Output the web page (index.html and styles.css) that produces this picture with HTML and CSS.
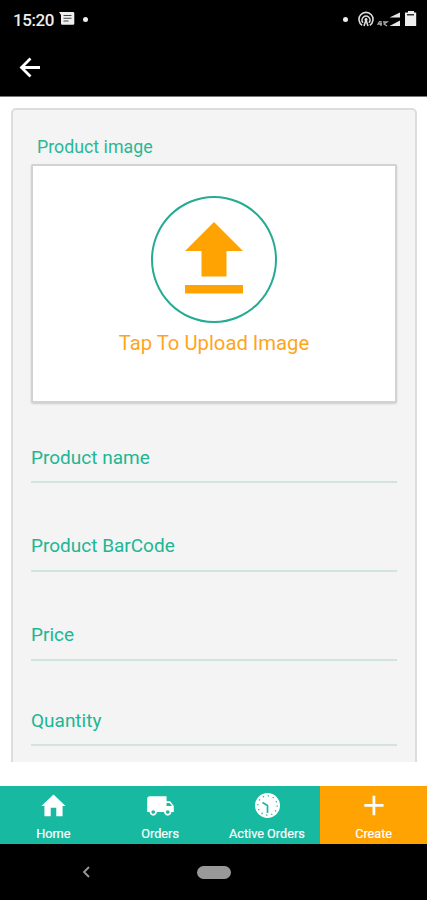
FILE: index.html
```html
<!DOCTYPE html>
<html lang="en">
<head>
<meta charset="utf-8">
<title>Create product</title>
<link rel="stylesheet" href="styles.css">
</head>
<body>
<div class="screen">
  <header class="top">
    <div class="status">
      <div class="status-left">
        <span class="time">15:20</span>
        <svg class="msg" width="16" height="14" viewBox="0 0 16 14"><path fill="#eee" d="M0 0h14a1.300 1.300 0 0 1 1.300 1.300v10.200a1.300 1.300 0 0 1-1.300 1.300H3.300A1.300 1.300 0 0 1 2 11.500V3z"/><path stroke="#444" stroke-width="1.100" d="M4.500 3.500h8M4.500 6.200h8M4.500 9h5"/></svg>
        <i class="dot"></i>
      </div>
      <div class="status-right">
        <i class="dot"></i>
        <svg width="75" height="18" viewBox="0 0 75 18">
          <g fill="none" stroke="#ddd" stroke-width="1.600"><path d="M4.200 15.300A7 7 0 1 1 11.800 15.300"/><path d="M5 12.800a4 4 0 1 1 6 0"/><path d="M6 16l2-6 2 6"/></g>
          <circle cx="8" cy="9.500" r="1.500" fill="#ddd"/>
          <path fill="none" stroke="#aaa" stroke-width="1.300" d="M22 11l-2 3h4M23 11v5M25 12h4l-3 2 3 2"/>
          <path fill="#e8e8e8" d="M31.500 7.500L42 2.500v5zM31.500 16L42 10.500V16z"/>
          <path fill="#eee" d="M48 2.500h2V1h6v1.500h2.200V16H47V2.500z"/><path fill="#333" d="M49 4h7v1.500h-7z"/>
        </svg>
      </div>
    </div>
    <svg class="back" width="22" height="22" viewBox="0 0 22 22"><path fill="none" stroke="#fff" stroke-width="2.800" d="M21 10.500H3M11.500 1.500L2.500 10.500l9 9"/></svg>
  </header>
  <main class="content">
    <section class="card">
      <h1 class="label">Product image</h1>
      <div class="upload">
        <div class="ring"><svg width="60" height="74" viewBox="0 0 60 74"><path fill="#ffa303" d="M30 0l29 29H42.500v25.500h-25V29H1zM1 63h58v8.500H1z"/></svg></div>
        <span class="tap">Tap To Upload Image</span>
      </div>
      <div class="field f1">Product name</div>
      <div class="field f2">Product BarCode</div>
      <div class="field f3">Price</div>
      <div class="field f4">Quantity</div>
    </section>
  </main>
  <nav class="tabs">
    <div class="tab"><svg width="29" height="29" viewBox="0 0 24 24"><path fill="#fff" d="M9.700 20.500v-7h4.600v7h5.200v-8.500h2.500L12 2.500 2 12h2.500v8.500z"/></svg><span>Home</span></div>
    <div class="tab"><svg width="29" height="29" viewBox="0 0 24 24"><path fill="#fff" d="M20 8h-3V4H3c-1.100 0-2 .9-2 2v11h2c0 1.660 1.340 3 3 3s3-1.340 3-3h6c0 1.660 1.340 3 3 3s3-1.340 3-3h2v-5l-3-4zM6 18.500c-.83 0-1.500-.67-1.500-1.500s.67-1.500 1.500-1.500 1.500.67 1.500 1.500-.67 1.500-1.500 1.500zm13.500-9l1.960 2.500H17V9.500h2.500zM18 18.500c-.83 0-1.500-.67-1.500-1.500s.67-1.500 1.500-1.500 1.500.67 1.500 1.500-.67 1.500-1.500 1.500z"/></svg><span>Orders</span></div>
    <div class="tab"><svg width="26" height="26" viewBox="0 0 26 26"><circle cx="13.500" cy="12.500" r="12.500" fill="#fff"/><circle cx="13.500" cy="12.500" r="9.700" fill="none" stroke="#18b9a1" stroke-width="1.300" stroke-dasharray="1.300 3.779"/><path fill="none" stroke="#18b9a1" stroke-width="1.700" d="M8.500 9.500l5 3V20"/></svg><span>Active Orders</span></div>
    <div class="tab active"><svg width="33" height="33" viewBox="0 0 24 24"><path fill="#fff" d="M19.300 12.600h-6v6.200h-2v-6.200h-6v-2h6V4.500h2v6.100h6z"/></svg><span>Create</span></div>
  </nav>
  <footer class="system">
    <svg width="8" height="12" viewBox="0 0 8 12"><path fill="none" stroke="#999" stroke-width="1.800" d="M7 1L2 6l5 5"/></svg>
    <i class="pill"></i><i></i>
  </footer>
</div>
</body>
</html>
```
FILE: styles.css
```css
* { box-sizing: border-box; }
body { margin: 0; background: #fff; font-family: Roboto, "Liberation Sans", sans-serif; }
svg { display: block; flex: none; }
.screen { width: 427px; height: 900px; display: flex; flex-direction: column; overflow: hidden; }
.top { height: 97px; flex: none; background: #000; border-bottom: 1px solid #777; }
.status { height: 38px; display: flex; justify-content: space-between; padding-left: 13px; }
.status-left, .status-right { display: flex; align-items: center; }
.time { color: #eee; font-size: 17px; font-weight: 500; width: 42px; letter-spacing: -0.4px; line-height: 38px; padding-top: 1px; }
.msg { margin-left: 4px; }
.dot { width: 5px; height: 5px; border-radius: 50%; background: #eee; margin-left: 8px; }
.status-right .dot { margin-right: 10px; }
.status-right svg { margin-right: -6px; }
.back { margin: 19px 0 0 19px; }
.content { height: 665px; flex: none; overflow: hidden; padding: 11px 10px 0 11px; }
.card { height: 700px; background: #f4f4f4; border: 2px solid #ddd; border-radius: 5px; padding: 25px 18px 0 18px; }
.label { margin: 0 0 6px 6px; color: #2bb795; font-size: 17.800px; font-weight: 400; line-height: 23px; }
.upload { height: 239px; background: #fff; border: 2px solid #d2d2d2; border-radius: 2px; box-shadow: 0 1px 2px #ccc; padding-top: 30px; display: flex; flex-direction: column; align-items: center; }
.ring { width: 126px; height: 127px; border: 2px solid #24ab92; border-radius: 50%; padding-top: 24px; display: flex; justify-content: center; flex: none; }
.tap { color: #ffa51c; font-size: 20.250px; line-height: 26px; margin-top: 7px; white-space: nowrap; }
.field { color: #20b694; font-size: 19px; line-height: 23px; height: 89px; padding-top: 51px; border-bottom: 2px solid #d1e4df; }
.f1 { height: 80px; padding-top: 43px; }
.f4 { height: 85px; padding-top: 48px; }
.tabs { height: 58px; margin-top: 24px; flex: none; display: grid; grid-template-columns: repeat(4, 1fr); }
.tab { background: #18b9a1; color: #fff; display: flex; flex-direction: column; align-items: center; font-size: 12.700px; font-weight: 400; -webkit-text-stroke: 0.2px #fff; }
.tab svg { height: 40px; }
.tab span { line-height: 16px; }
.active { background: #ffa303; }
.system { flex: 1; background: #000; display: grid; grid-template-columns: 171px 85px 171px; justify-items: center; align-items: center; }
.pill { width: 34px; height: 13px; border-radius: 7px; background: #999; }
```
